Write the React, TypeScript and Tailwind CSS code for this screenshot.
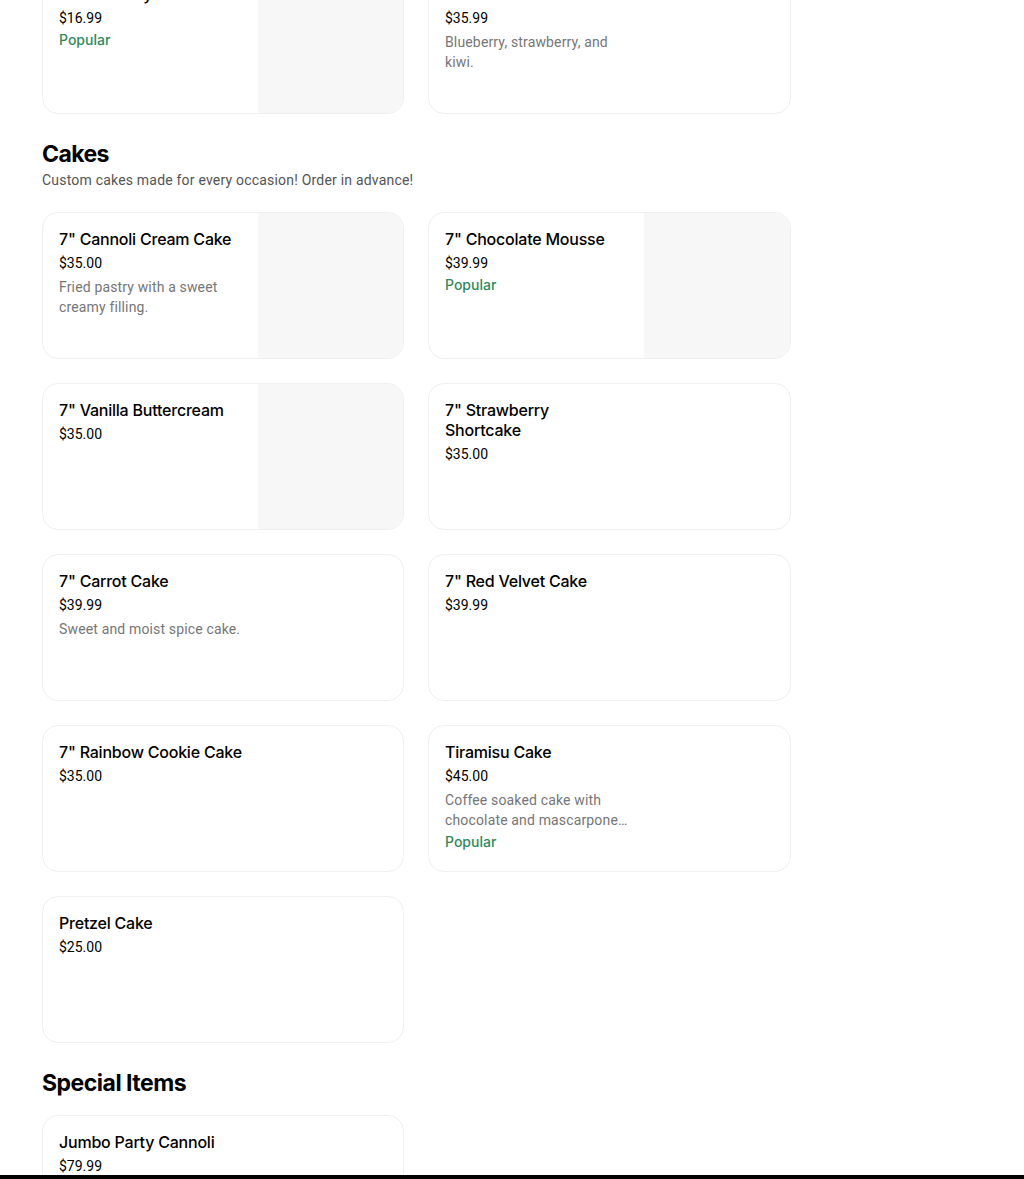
import React from "react";

type Item = {
  name: string;
  price: string;
  desc?: string;
  popular?: boolean;
  image?: boolean;
};

const topItems: Item[] = [
  { name: "Cannoli Tray", price: "$16.99", popular: true, image: true },
  { name: "Fruit Tart", price: "$35.99", desc: "Blueberry, strawberry, and kiwi." },
];

const cakes: Item[] = [
  { name: '7" Cannoli Cream Cake', price: "$35.00", desc: "Fried pastry with a sweet creamy filling.", image: true },
  { name: '7" Chocolate Mousse', price: "$39.99", popular: true, image: true },
  { name: '7" Vanilla Buttercream', price: "$35.00", image: true },
  { name: '7" Strawberry Shortcake', price: "$35.00" },
  { name: '7" Carrot Cake', price: "$39.99", desc: "Sweet and moist spice cake." },
  { name: '7" Red Velvet Cake', price: "$39.99" },
  { name: '7" Rainbow Cookie Cake', price: "$35.00" },
  {
    name: "Tiramisu Cake",
    price: "$45.00",
    desc: "Coffee soaked cake with chocolate and mascarpone cream layers.",
    popular: true,
  },
  { name: "Pretzel Cake", price: "$25.00" },
];

const specials: Item[] = [{ name: "Jumbo Party Cannoli", price: "$79.99" }];

const inter = { fontFamily: "Inter, 'Liberation Sans', sans-serif" };

function Card({ item }: { item: Item }) {
  return (
    <div className="flex h-[147px] overflow-hidden rounded-2xl border border-[#efefef] bg-white">
      <div className="flex w-[215px] shrink-0 flex-col px-4 pt-4">
        <div className="text-[16px] font-medium leading-5 tracking-[-0.22px] text-black" style={inter}>
          {item.name}
        </div>
        <div className="mt-1 text-[14px] leading-5 text-black">{item.price}</div>
        {item.desc && (
          <div className="mt-1 line-clamp-2 text-[14px] leading-5 tracking-[0.15px] text-[#767676]">
            {item.desc}
          </div>
        )}
        {item.popular && (
          <div className="mt-0.5 text-[14px] font-medium leading-5 text-[#2f8a5b]" style={inter}>
            Popular
          </div>
        )}
      </div>
      <div className="flex-1">
        {item.image && <div className="h-full w-full bg-[#f7f7f7]" />}
      </div>
    </div>
  );
}

function Grid({ items }: { items: Item[] }) {
  return (
    <div className="grid grid-cols-[362px_363px] gap-6">
      {items.map((it, i) => (
        <Card key={i} item={it} />
      ))}
    </div>
  );
}

export default function App() {
  return (
    <div
      className="min-h-[1179px] bg-white pl-[42px] text-black"
      style={{ fontFamily: "Roboto, 'Liberation Sans', sans-serif" }}
    >
      <div className="-mt-[33px]">
        <Grid items={topItems} />
      </div>

      <div className="mt-[24px]">
        <h2 className="text-[23px] font-bold leading-8 tracking-[-0.6px]" style={inter}>
          Cakes
        </h2>
        <p className="text-[14px] leading-5 tracking-[0.2px] text-[#545454]">
          Custom cakes made for every occasion! Order in advance!
        </p>
      </div>
      <div className="mt-[22px]">
        <Grid items={cakes} />
      </div>

      <div className="mt-[24px]">
        <h2 className="text-[23px] font-bold leading-8 tracking-[-0.5px]" style={inter}>
          Special Items
        </h2>
      </div>
      <div className="mt-[16px] pb-10">
        <Grid items={specials} />
      </div>

      <div className="fixed bottom-0 left-0 right-0 h-[4px] bg-black" />
    </div>
  );
}
